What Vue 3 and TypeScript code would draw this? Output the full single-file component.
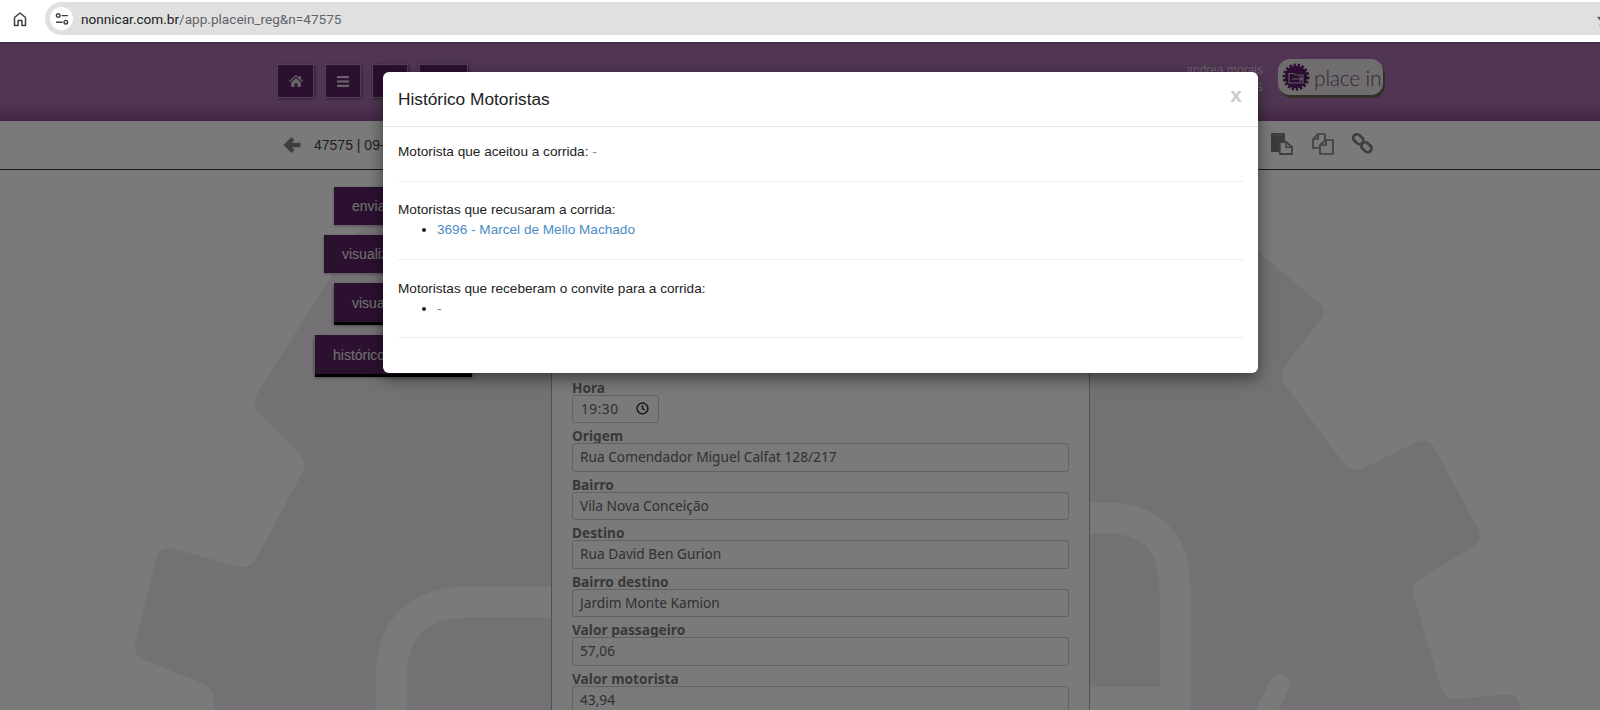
<script setup lang="ts">
type Pt = [number, number]

function roundPath(points: Pt[], r: number): string {
  const n = points.length
  let d = ''
  for (let i = 0; i < n; i++) {
    const p = points[i]
    const a = points[(i + n - 1) % n]
    const b = points[(i + 1) % n]
    const la = Math.hypot(a[0] - p[0], a[1] - p[1])
    const lb = Math.hypot(b[0] - p[0], b[1] - p[1])
    const ra = Math.min(r, la / 2)
    const rb = Math.min(r, lb / 2)
    const s: Pt = [p[0] + ((a[0] - p[0]) * ra) / la, p[1] + ((a[1] - p[1]) * ra) / la]
    const e: Pt = [p[0] + ((b[0] - p[0]) * rb) / lb, p[1] + ((b[1] - p[1]) * rb) / lb]
    d += `${i === 0 ? 'M' : 'L'}${s[0].toFixed(1)} ${s[1].toFixed(1)}Q${p[0]} ${p[1]} ${e[0].toFixed(1)} ${e[1].toFixed(1)}`
  }
  return d + 'Z'
}

const gearPath = roundPath(
  [
    [383, 190], [335, 270], [250, 405], [308, 462], [250, 570], [160, 545], [132, 655],
    [214, 688], [214, 760], [1530, 760], [1518, 693], [1445, 700], [1410, 585], [1484, 540],
    [1428, 436], [1352, 474], [1278, 375], [1328, 310], [1240, 236], [1100, 170]
  ],
  14
)

const sideButtons = ['enviar convite', 'visualizar mapa', 'visualizar rota', 'histórico motoristas']

const fields = [
  { label: 'Origem', value: 'Rua Comendador Miguel Calfat 128/217' },
  { label: 'Bairro', value: 'Vila Nova Conceição' },
  { label: 'Destino', value: 'Rua David Ben Gurion' },
  { label: 'Bairro destino', value: 'Jardim Monte Kamion' },
  { label: 'Valor passageiro', value: '57,06' },
  { label: 'Valor motorista', value: '43,94' }
]
</script>

<template>
  <div class="root">
    <div class="chrome">
      <svg class="chrome-home" width="16" height="16" viewBox="0 0 16 16" fill="none" stroke="#3c4043" stroke-width="1.5">
        <path d="M2.5 14.5V6.5L8 2l5.5 4.5v8h-3.6V9.5H6.1v5z" stroke-linejoin="round" />
      </svg>
      <div class="address">
        <span class="tune">
          <svg width="14" height="12" viewBox="0 0 14 12" fill="none" stroke="#3c4043" stroke-width="1.4">
            <circle cx="3.2" cy="2.6" r="1.8" />
            <path d="M6.5 2.6H13M1 9.2h6.5" />
            <circle cx="10.8" cy="9.2" r="1.8" />
          </svg>
        </span>
        <span class="url"><span class="host">nonnicar.com.br</span>/app.placein_reg&amp;n=47575</span>
        <svg class="star" width="14" height="14" viewBox="0 0 14 14" fill="none" stroke="#555" stroke-width="1.4">
          <path d="M7 1.5l1.7 3.6 3.9.5-2.9 2.7.8 3.9L7 10.8l-3.5 1.9.8-3.9L1.4 5.6l3.9-.5z" />
        </svg>
      </div>
    </div>

    <div class="site">
      <svg class="watermark" width="1600" height="668" viewBox="0 42 1600 668">
        <path :d="gearPath" fill="#f3ecf3" />
        <g fill="none" stroke="#fff" stroke-width="31">
          <path d="M391 730V680Q391 602 470 602H560" />
          <path d="M1080 518H1105Q1175 518 1175 590V730" />
        </g>
        <rect x="1085" y="687" width="90" height="30" fill="#fff" />
        <path d="M1280 684L1262 720" stroke="#fff" stroke-width="20" stroke-linecap="round" fill="none" />
      </svg>

      <header class="topbar">
        <nav class="topnav">
          <button class="navbtn home">
            <svg width="14" height="12" viewBox="0 0 14 12" fill="#d8d0d8">
              <path d="M7 0L0 6l.8.9L7 1.6l6.2 5.3.8-.9-2.2-1.9V1h-1.8v1.6zM2.2 7.2V12h3.4V8.6h2.8V12h3.4V7.2L7 3z" />
            </svg>
          </button>
          <button class="navbtn menu">
            <svg width="12" height="11" viewBox="0 0 12 11" fill="#d8d0d8">
              <rect width="12" height="2.2" />
              <rect y="4.4" width="12" height="2.2" />
              <rect y="8.8" width="12" height="2.2" />
            </svg>
          </button>
          <button class="navbtn third"></button>
          <button class="navbtn fourth"></button>
        </nav>
        <div class="account">
          <div class="user">
            <span class="user-name">andrea morais</span>
            <span class="user-role">motoristas</span>
          </div>
          <div class="logo">
            <svg width="28" height="28" viewBox="0 0 28 28">
              <circle cx="14" cy="14" r="11.2" fill="#5a1f66" />
              <circle cx="14" cy="14" r="12.2" fill="none" stroke="#5a1f66" stroke-width="2.6" stroke-dasharray="2.4 1.8" />
              <path d="M7 10.5h5l1.2 1.5H21v8H7z" fill="none" stroke="#ccc" stroke-width="1.1" />
              <path d="M10 16h10M17.5 13.5L20 16l-2.5 2.5" fill="none" stroke="#ccc" stroke-width="1.1" />
            </svg>
            <span class="logo-text">place in</span>
          </div>
        </div>
      </header>

      <div class="subbar">
        <svg class="back" width="18" height="18" viewBox="0 0 18 18" fill="none" stroke="#808488" stroke-width="4.4">
          <path d="M17.5 9H4M10 2.5L3.5 9l6.5 6.5" />
        </svg>
        <span class="ride">47575 | 09-08-2023 19:30</span>
        <div class="tools">
          <svg width="23" height="23" viewBox="0 0 23 23">
            <path d="M1 1h14v9H9v10H1z" fill="#787a80" />
            <path d="M3 3h10" stroke="#a4a6aa" stroke-width="1" />
            <path d="M9.8 10h6.4l5.8 5v7H9.8z" fill="none" stroke="#808488" stroke-width="1.8" stroke-linejoin="round" />
            <path d="M16 10.2v5h5.8" fill="none" stroke="#808488" stroke-width="1.4" />
          </svg>
          <svg width="23" height="23" viewBox="0 0 23 23" fill="none" stroke="#808488" stroke-width="1.7" stroke-linejoin="round">
            <path d="M14 8V2H7L2 7v9h6" />
            <path d="M7 2v5H2" />
            <path d="M15 8h7v14H9V13z" />
            <path d="M15 8v5H9" />
          </svg>
          <svg width="21" height="21" viewBox="0 0 21 21" fill="none" stroke="#808488" stroke-width="2.8">
            <rect x="0.8" y="2.5" width="11" height="7.5" rx="3.7" transform="rotate(42 6.3 6.2)" />
            <rect x="9" y="10.5" width="11" height="7.5" rx="3.7" transform="rotate(42 14.5 14.2)" />
          </svg>
        </div>
      </div>

      <main class="content">
        <aside class="side">
          <button v-for="label in sideButtons" :key="label" class="sidebtn">{{ label }}</button>
        </aside>
        <section class="card">
          <div class="field">
            <div class="flabel">Hora</div>
            <div class="finput time">
              <span>19:30</span>
              <svg width="13" height="13" viewBox="0 0 13 13" fill="none" stroke="#333" stroke-width="1.5">
                <circle cx="6.5" cy="6.5" r="5.4" />
                <path d="M6.5 3.2v3.5l2.2 1.2" />
              </svg>
            </div>
          </div>
          <div v-for="f in fields" :key="f.label" class="field">
            <div class="flabel">{{ f.label }}</div>
            <div class="finput">{{ f.value }}</div>
          </div>
        </section>
      </main>

      <div class="backdrop"></div>

      <div class="modal">
        <div class="modal-head">
          <h4>Histórico Motoristas</h4>
          <span class="close">x</span>
        </div>
        <div class="modal-body">
          <div>Motorista que aceitou a corrida: <a class="muted">-</a></div>
          <hr />
          <div>Motoristas que recusaram a corrida:</div>
          <ul>
            <li><a>3696 - Marcel de Mello Machado</a></li>
          </ul>
          <hr />
          <div>Motoristas que receberam o convite para a corrida:</div>
          <ul>
            <li><a>-</a></li>
          </ul>
          <hr />
        </div>
      </div>
    </div>
  </div>
</template>

<style>
html,
body {
  margin: 0;
  background: #fff;
}
</style>

<style scoped>
.root {
  width: 1600px;
  height: 710px;
  overflow: hidden;
  font-family: "Liberation Sans", Arial, sans-serif;
  font-size: 14px;
}
.chrome {
  height: 42px;
  box-sizing: border-box;
  padding-top: 2px;
  display: flex;
  align-items: flex-start;
  background: #fff;
}
.chrome-home {
  margin: 9px 0 0 12px;
}
.address {
  margin-left: 17px;
  flex: 1;
  height: 33px;
  display: flex;
  align-items: center;
  background: #e0e0e0;
  border-radius: 17px 0 0 17px;
  padding-left: 5px;
}
.tune {
  width: 23px;
  height: 23px;
  border-radius: 50%;
  background: #fff;
  display: flex;
  align-items: center;
  justify-content: center;
}
.url {
  margin-left: 8px;
  font-family: "Roboto", sans-serif;
  font-size: 13.6px;
  color: #5f6368;
  flex: 1;
}
.host {
  color: #202124;
}
.star {
  margin-right: -11px;
}
.site {
  position: relative;
  height: 668px;
  background: #fff;
}
.watermark {
  position: absolute;
  left: 0;
  top: 0;
}
.topbar {
  position: relative;
  height: 79px;
  box-sizing: border-box;
  background: linear-gradient(#7e5a86 0, #a872ae 3px, #a872ae 60px, #8a5292 79px);
  padding: 22px 217px 0 277px;
  display: flex;
  justify-content: space-between;
  align-items: flex-start;
}
.topnav {
  display: flex;
  gap: 11px;
}
.navbtn {
  height: 34px;
  width: 37px;
  padding: 0;
  background: #5a2265;
  border: 1px solid #a888ae;
  box-shadow: 1px 1px 3px rgba(0, 0, 0, 0.4);
  display: flex;
  align-items: center;
  justify-content: center;
}
.navbtn.menu,
.navbtn.third {
  width: 36px;
}
.navbtn.fourth {
  width: 49px;
}
.account {
  display: flex;
  gap: 15px;
  margin-top: -5px;
}
.user {
  display: flex;
  flex-direction: column;
  align-items: flex-end;
  color: #e0cbe3;
  padding-top: 4px;
}
.user-name {
  font-size: 12px;
  line-height: 14px;
}
.user-role {
  font-size: 15px;
  line-height: 18px;
}
.logo {
  width: 105px;
  height: 36px;
  box-sizing: border-box;
  background: #eae4e8;
  border-radius: 12px;
  box-shadow: 2px 3px 0 #6a6450;
  display: flex;
  align-items: center;
  padding-left: 4px;
  gap: 4px;
}
.logo-text {
  font-family: "Lato", sans-serif;
  font-weight: 300;
  font-size: 21px;
  white-space: nowrap;
  letter-spacing: -0.2px;
  color: #6e5076;
}
.subbar {
  position: relative;
  height: 49px;
  box-sizing: border-box;
  background: #fff;
  border-bottom: 1px solid #333;
  padding: 0 0 0 283px;
  display: flex;
  align-items: center;
}
.back {
  margin-right: 13px;
}
.ride {
  color: #444;
  font-size: 14px;
}
.tools {
  position: absolute;
  left: 1270px;
  top: 11px;
  display: flex;
  align-items: center;
  gap: 18px;
}
.content {
  position: relative;
  display: flex;
  align-items: flex-start;
  padding-left: 315px;
}
.side {
  width: 157px;
  padding-top: 17px;
  margin-right: 79px;
  display: flex;
  flex-direction: column;
  align-items: center;
}
.sidebtn {
  height: 38px;
  margin-bottom: 10px;
  padding: 0 0 0 18px;
  text-align: left;
  border: 0;
  background: #5a2265;
  color: #eee;
  font-family: "Liberation Sans", Arial, sans-serif;
  font-size: 14px;
  white-space: nowrap;
  overflow: hidden;
  box-shadow: 0 1px 3px rgba(0, 0, 0, 0.3);
}
.sidebtn:nth-child(1),
.sidebtn:nth-child(3) {
  width: 119px;
}
.sidebtn:nth-child(2) {
  width: 139px;
}
.sidebtn:nth-child(4) {
  width: 157px;
}
.sidebtn:nth-child(3),
.sidebtn:nth-child(4) {
  height: 39px;
  box-shadow: 0 3px 0 #000, 0 3px 4px rgba(0, 0, 0, 0.5);
  margin-bottom: 13px;
}
.card {
  width: 539px;
  height: 560px;
  box-sizing: border-box;
  background: #fff;
  border: 1px solid #aaa;
  border-width: 0 1px;
  padding: 207.5px 20px 0;
}
.field {
  display: flex;
  flex-direction: column;
  height: 48.6px;
  font-family: "Noto Sans", sans-serif;
  color: #666;
}
.flabel {
  font-size: 13.7px;
  font-weight: 700;
  line-height: 20px;
  height: 17px;
  color: #777;
}
.finput {
  height: 28.5px;
  box-sizing: border-box;
  border: 1px solid #ccc;
  border-radius: 3px;
  padding: 0 7px;
  font-size: 13.7px;
  line-height: 26px;
}
.finput.time {
  width: 87px;
  padding: 0 9px 0 8px;
  letter-spacing: 0.5px;
  display: flex;
  align-items: center;
  justify-content: space-between;
}
.backdrop {
  position: absolute;
  inset: 0;
  background: rgba(0, 0, 0, 0.52);
}
.modal {
  position: absolute;
  left: 383px;
  top: 30px;
  width: 875px;
  height: 301px;
  background: #fff;
  border-radius: 6px;
  box-shadow: 0 5px 15px rgba(0, 0, 0, 0.5);
  color: #222;
}
.modal-head {
  height: 55px;
  box-sizing: border-box;
  padding: 0 15px;
  border-bottom: 1px solid #e5e5e5;
  display: flex;
  align-items: center;
  justify-content: space-between;
}
.modal-head h4 {
  margin: 0;
  font-size: 17.3px;
  font-weight: 400;
  color: #222;
}
.close {
  font-size: 21px;
  font-weight: 700;
  color: #ccc;
  margin-right: 1px;
  margin-top: -8px;
}
.modal-body {
  padding: 15px;
  font-size: 13.6px;
  line-height: 20px;
}
.modal-body a {
  color: #4a8cc6;
}
.modal-body a.muted {
  color: #6a8ca8;
}
.modal-body hr {
  border: 0;
  border-top: 1px solid #eee;
  margin: 18.7px 0;
}
.modal-body ul {
  margin: 0;
  padding-left: 39px;
}
</style>
